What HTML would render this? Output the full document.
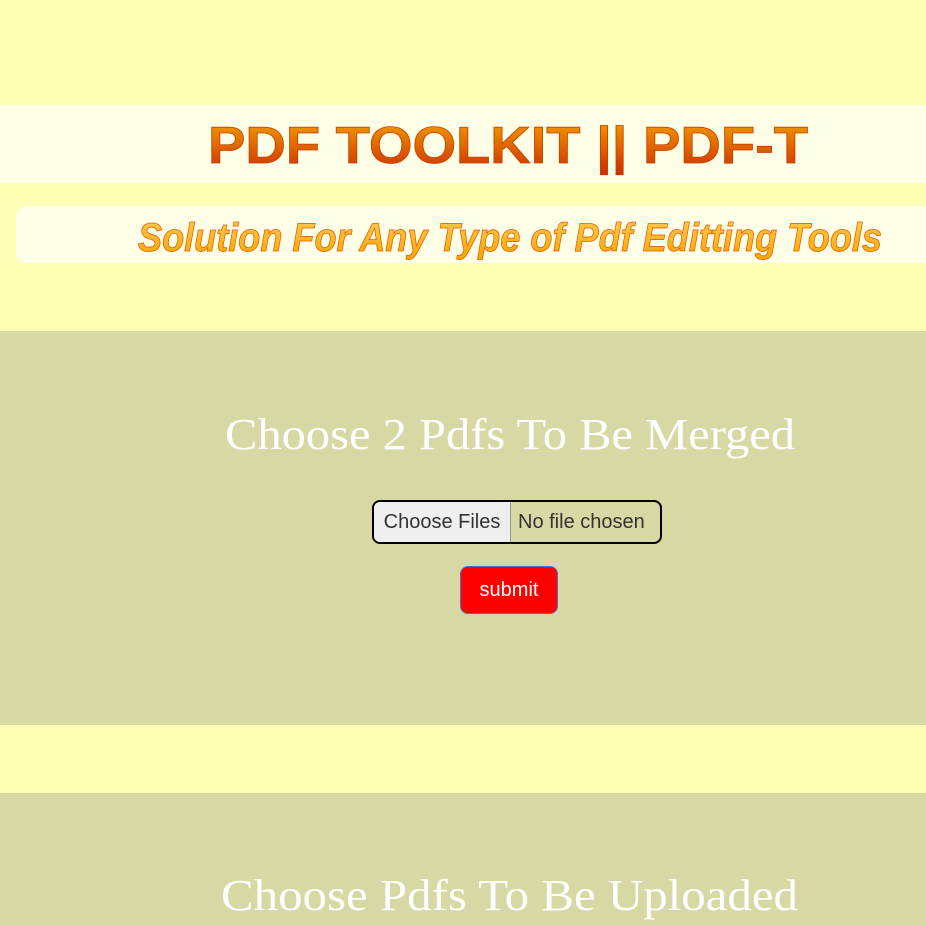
<!DOCTYPE html>
<html><head><style>
body{margin:0;width:926px;height:926px;overflow:hidden;background:#ffffb5;font-family:"Liberation Sans",sans-serif;position:relative}
.abs{position:absolute}
</style></head><body>
<div class="abs" style="left:0;top:105px;width:926px;height:78px;background:#fffee6"></div>
<div class="abs" style="left:16px;top:206px;width:920px;height:57px;background:#fffee6;border-radius:10px"></div>
<svg class="abs" style="left:0;top:0" width="926" height="926">
<defs>
<linearGradient id="g1" x1="0" y1="0" x2="0" y2="1"><stop offset="0" stop-color="#f3a300"/><stop offset="1" stop-color="#cc2a00"/></linearGradient>
<linearGradient id="g2" x1="0" y1="0" x2="0" y2="1"><stop offset="0" stop-color="#ffcc55"/><stop offset="1" stop-color="#f7a500"/></linearGradient>
</defs>
<text x="208" y="163" font-family="Liberation Sans" font-weight="bold" font-size="52" textLength="600" lengthAdjust="spacingAndGlyphs" fill="url(#g1)" stroke="#c84000" stroke-width="0.8">PDF TOOLKIT || PDF-T</text>
<text x="138" y="251" font-family="Liberation Sans" font-weight="bold" font-style="italic" font-size="40" textLength="744" lengthAdjust="spacingAndGlyphs" fill="url(#g2)" stroke="#e85a00" stroke-width="0.8">Solution For Any Type of Pdf Editting Tools</text>
<rect x="0" y="331" width="926" height="394" fill="#d8d8a4"/>
<rect x="0" y="793" width="926" height="140" fill="#d8d8a4"/>
<text x="225" y="449" font-family="Liberation Serif" font-size="44" fill="#fff" textLength="570" lengthAdjust="spacingAndGlyphs">Choose 2 Pdfs To Be Merged</text>
<text x="221" y="910" font-family="Liberation Serif" font-size="44" fill="#fff" textLength="577" lengthAdjust="spacingAndGlyphs">Choose Pdfs To Be Uploaded</text>
</svg>
<div class="abs" style="left:372px;top:500px;width:286px;height:40px;border:2px solid #000;border-radius:8px;overflow:hidden;font-size:20px;color:#333">
<div class="abs" style="left:0;top:0;width:136px;height:40px;background:#efefef;border-right:1px solid #999;line-height:40px;text-align:center">Choose Files</div>
<div class="abs" style="left:144px;top:0;line-height:40px">No file chosen</div>
</div>
<div class="abs" style="left:460px;top:566px;width:96px;height:46px;background:#f00;border:1px solid #4a6fd0;border-radius:8px;color:#fff;font-size:20px;line-height:46px;text-align:center">submit</div>
</body></html>
